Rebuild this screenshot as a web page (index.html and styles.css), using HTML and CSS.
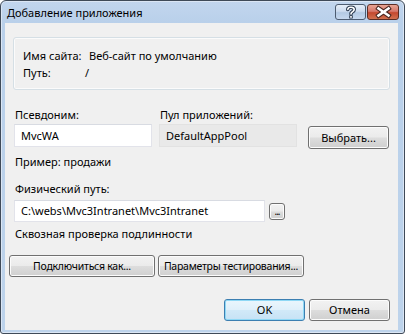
FILE: index.html
```html
<!DOCTYPE html>
<html lang="ru">
<head>
<meta charset="utf-8">
<title>Добавление приложения</title>
<link rel="stylesheet" href="styles.css">
</head>
<body>
<div class="window">
  <div class="titlebar">
    <div class="title">Добавление приложения</div>
    <div class="caption-buttons">
      <div class="cap-btn help">
        <svg width="30" height="16" viewBox="0 0 30 16">
          <path d="M11.8 5.4 C12 3.8 13.3 3.2 15 3.2 C16.9 3.2 18.2 4.1 18.2 5.6 C18.2 7.1 16.9 7.5 15.8 8.3 C15.2 8.7 15 9.1 15 9.9" fill="none" stroke="#2b3a4e" stroke-width="3.6" stroke-linecap="round"/>
          <rect x="13.2" y="11.2" width="3.6" height="3.3" fill="#2b3a4e" rx="0.6"/>
          <path d="M11.8 5.4 C12 3.8 13.3 3.2 15 3.2 C16.9 3.2 18.2 4.1 18.2 5.6 C18.2 7.1 16.9 7.5 15.8 8.3 C15.2 8.7 15 9.1 15 9.9" fill="none" stroke="#ffffff" stroke-width="1.6" stroke-linecap="round"/>
          <rect x="14.1" y="12.1" width="1.8" height="1.6" fill="#ffffff"/>
        </svg>
      </div>
      <div class="cap-btn close">
        <svg width="31" height="16" viewBox="0 0 31 16">
          <path d="M10.5 4.5 L20.5 11.5 M20.5 4.5 L10.5 11.5" fill="none" stroke="#4a2620" stroke-width="4.6" stroke-linecap="square"/>
          <path d="M10.5 4.5 L20.5 11.5 M20.5 4.5 L10.5 11.5" fill="none" stroke="#ffffff" stroke-width="2.6" stroke-linecap="square"/>
        </svg>
      </div>
    </div>
  </div>
  <div class="client">
    <div class="groupbox">
      <div class="info-grid">
        <span>Имя сайта:</span><span class="val">Веб-сайт по умолчанию</span>
        <span>Путь:</span><span class="val slash">/</span>
      </div>
    </div>

    <div class="alias-grid">
      <label class="lbl">Псевдоним:</label>
      <label class="lbl">Пул приложений:</label>
      <span></span>
      <div class="textbox">MvcWA</div>
      <div class="textbox readonly">DefaultAppPool</div>
      <button class="btn select-btn">Выбрать...</button>
    </div>
    <div class="hint">Пример: продажи</div>

    <div class="lbl phys-label">Физический путь:</div>
    <div class="path-row">
      <div class="textbox path">C:\webs\Mvc3Intranet\Mvc3Intranet</div>
      <button class="btn dots">...</button>
    </div>
    <div class="hint auth">Сквозная проверка подлинности</div>

    <div class="action-row">
      <button class="btn wide">Подключиться как...</button>
      <button class="btn wide">Параметры тестирования...</button>
    </div>

    <div class="dialog-row">
      <button class="btn std default">OK</button>
      <button class="btn std">Отмена</button>
    </div>
  </div>
</div>
</body>
</html>
```

FILE: styles.css
```css
* { box-sizing: border-box; }
html, body { margin: 0; padding: 0; }
body {
  width: 405px;
  height: 335px;
  background: #ffffff;
  font-family: "Noto Sans", "Open Sans", sans-serif;
  font-size: 11px;
  color: #000;
  overflow: hidden;
}
.window {
  width: 405px;
  height: 334px;
  border: 1px solid #3f4a58;
  border-radius: 6px 6px 3px 3px;
  background: linear-gradient(#c2d6ee 0, #b9d0ea 22px, #bdd3eb 100%);
  display: flex;
  flex-direction: column;
  box-shadow: inset 0 0 0 1px #dbe6f4;
}
.titlebar {
  height: 22px;
  display: flex;
  justify-content: space-between;
  align-items: flex-start;
  padding: 0 5px 0 6px;
}
.title {
  font-size: 11px;
  line-height: 22px;
  color: #000;
  padding-top: 1px;
}
.caption-buttons {
  display: flex;
  gap: 1px;
  padding-top: 3px;
}
.cap-btn {
  height: 16px;
  border: 1px solid #4d5c70;
  border-radius: 3px;
  overflow: hidden;
  display: flex;
  align-items: center;
  justify-content: center;
}
.cap-btn svg { display: block; margin: -1px; }
.help {
  width: 31px;
  background: linear-gradient(#e6eef8 0%, #ccdbee 45%, #b3c9e3 55%, #c6d8ee 100%);
}
.close {
  width: 32px;
  border-color: #5b2d25;
  background: linear-gradient(#e8a493 0%, #d6776a 45%, #c4482f 55%, #d2714f 100%);
}
.client {
  flex: 1;
  margin: 0 6px 3px 4px;
  background: #f0f0f0;
  padding: 14px 8px 0 8px;
  display: flex;
  flex-direction: column;
}
.groupbox {
  height: 53px;
  border: 1px solid #d5dfe5;
  border-radius: 3px;
  box-shadow: inset 0 0 0 1px #fbfbfb;
  padding: 9px 0 0 9px;
}
.info-grid {
  display: grid;
  grid-template-columns: 66px auto;
  grid-auto-rows: 17px;
  line-height: 17px;
  align-items: center;
}
.slash { margin-left: -4px; }
.alias-grid {
  margin-top: 17px;
  padding-left: 1px;
  display: grid;
  grid-template-columns: 138px 138px 81px;
  column-gap: 7px;
  grid-template-rows: 16px 23px;
  row-gap: 1px;
}
.alias-grid .select-btn { margin-left: 4px; margin-top: 2px; }
.lbl { line-height: 16px; padding-left: 1px; }
.textbox {
  height: 23px;
  background: #fff;
  border: 1px solid #e2e3ea;
  border-top-color: #d8dbe2;
  line-height: 21px;
  padding-left: 6px;
  white-space: nowrap;
}
.textbox.readonly {
  background: #e9e9e9;
  border-color: #e2e2e2;
}
.hint {
  margin-top: 7px;
  line-height: 16px;
  padding-left: 2px;
}
.phys-label { margin-top: 11px; padding-left: 2px; }
.path-row {
  margin-top: 3px;
  padding-left: 1px;
  display: flex;
  align-items: center;
  gap: 4px;
}
.textbox.path { width: 251px; height: 22px; line-height: 20px; }
.hint.auth { margin-top: 4px; }
.btn {
  font-family: inherit;
  font-size: 11px;
  color: #000;
  height: 22px;
  padding: 0;
  border: 1px solid #707070;
  border-radius: 3px;
  background: linear-gradient(#f2f2f2 0%, #ebebeb 48%, #dddddd 52%, #cfcfcf 100%);
  box-shadow: inset 0 0 0 1px #fcfcfc;
  line-height: 20px;
  text-align: center;
  white-space: nowrap;
}
.select-btn { width: 81px; height: 23px; }
.dots {
  width: 16px;
  height: 17px;
  line-height: 12px;
  font-size: 10px;
  letter-spacing: -1px;
}
.action-row {
  margin-top: 13px;
  margin-left: -4px;
  display: flex;
  gap: 3px;
}
.wide {
  width: 146px;
  font-size: 10.5px;
  letter-spacing: -0.25px;
}
.dialog-row {
  margin-top: 22px;
  display: flex;
  justify-content: flex-end;
  gap: 4px;
}
.std { width: 81px; }
.default {
  border-color: #3c7fb1;
  box-shadow: inset 0 0 0 1px #8fd8f5;
  background: linear-gradient(#eaf6fd 0%, #e0f0fa 48%, #d1e9f8 52%, #c6e2f5 100%);
}
```
